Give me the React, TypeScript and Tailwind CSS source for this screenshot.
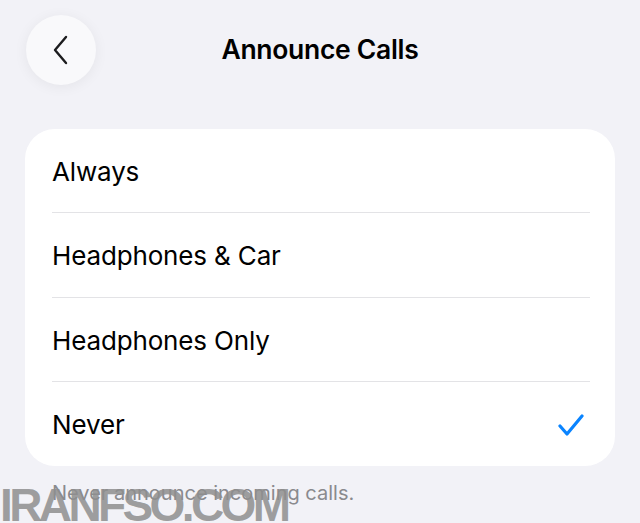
import React from 'react'

const options = ["Always", "Headphones & Car", "Headphones Only", "Never"];

const BackButton = () => (
  <button className="w-[70px] h-[70px] rounded-full bg-[#f9f9fb] shadow-[0_2px_14px_rgba(0,0,0,0.06)] flex items-center justify-center">
    <svg width="20" height="30" viewBox="0 0 20 30" fill="none">
      <path d="M15 2 L4 15 L15 28" stroke="#1c1c1e" strokeWidth="2.4" strokeLinecap="round" strokeLinejoin="round" />
    </svg>
  </button>
);

const Check = () => (
  <svg width="26" height="22" viewBox="0 0 26 22" fill="none">
    <path d="M2 12 L9 20 L24 2" stroke="#0a84ff" strokeWidth="3.2" strokeLinecap="round" strokeLinejoin="round" />
  </svg>
);

export default function App() {
  const selected = "Never";

  return (
    <div className="relative w-full h-[523px] overflow-hidden bg-[#f2f2f7] font-['Inter','Noto_Sans',sans-serif] text-black">
      {/* nav bar */}
      <div className="grid grid-cols-[70px_1fr_70px] items-center px-[26px] pt-[15px]">
        <BackButton />
        <h1 className="text-center text-[26.5px] font-semibold tracking-[-0.3px]">Announce Calls</h1>
        <div />
      </div>

      {/* option list */}
      <div className="mx-[25px] mt-[44px] rounded-[30px] bg-white overflow-hidden">
        {options.map((opt, i) => (
          <div key={opt} className="h-[84.25px] pl-[27px] flex">
            <div
              className={
                i < options.length - 1
                  ? "flex-1 mr-[25px] flex items-center justify-between border-b border-[#e3e3e6]"
                  : "flex-1 mr-[25px] flex items-center justify-between"
              }
            >
              <span className="text-[26px] tracking-[-0.15px] mt-[2px]">{opt}</span>
              {opt === selected && (
                <span className="mr-[6px] mt-[2px]">
                  <Check />
                </span>
              )}
            </div>
          </div>
        ))}
      </div>

      <p className="pl-[52px] mt-[12px] text-[20px] text-[#8a8a8e]">Never announce incoming calls.</p>

      <div className="absolute left-0 top-[482px] text-[46px] leading-none font-bold tracking-[-3.6px] text-[#8e8e8e]/85 font-['Liberation_Sans',sans-serif]">
        IRANFSO.COM
      </div>
    </div>
  );
}
